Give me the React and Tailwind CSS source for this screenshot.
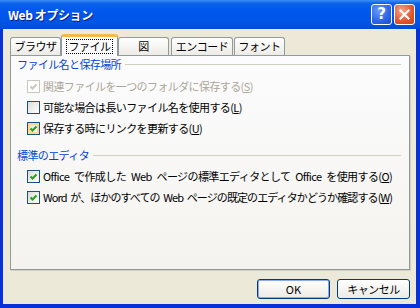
import React from 'react';

const ui = "font-['Noto_Sans_CJK_JP',sans-serif]";

function CheckBox({ checked, disabled, hot }) {
  return (
    <span
      className={`relative block w-[13px] h-[13px] shrink-0 border ${
        disabled ? 'border-[#CAC8BB] bg-white' : 'border-[#1C5180] bg-[linear-gradient(135deg,#DCDCD7,#FFFFFF)]'
      }`}
    >
      {hot && <span className="absolute inset-0 border-2 border-[#F9D98C]" />}
      {checked && (
        <svg className="absolute inset-0" width="11" height="11" viewBox="0 0 11 11">
          <path d="M2.5 5.5 L4.5 7.5 L8.5 3.5" fill="none" stroke={disabled ? '#CAC8BB' : '#21A121'} strokeWidth="2" />
        </svg>
      )}
    </span>
  );
}

function Row({ label, acc, checked, disabled, hot, mt, text }) {
  return (
    <div className={`flex items-center h-[21px] pl-[16px] ${mt || ''}`}>
      <CheckBox checked={checked} disabled={disabled} hot={hot} />
      <span
        className={`ml-[3px] text-[11px] leading-none whitespace-nowrap ${text || 'tracking-[-0.6px]'} ${
          disabled ? 'text-[#ACA899]' : 'text-black'
        }`}
      >
        {label}(<span className="underline">{acc}</span>)
      </span>
    </div>
  );
}

function GroupHeader({ text, mt }) {
  return (
    <div className={`flex items-center h-[16px] pl-[6px] pr-[8px] ${mt || ''}`}>
      <span className="text-[11px] tracking-[-0.6px] leading-none text-[#0046D5] whitespace-nowrap">{text}</span>
      <span className="flex-1 h-px ml-[4px] bg-[#D0D0BF]" />
    </div>
  );
}

function Tab({ label, className }) {
  return (
    <div
      className={`h-[18px] flex items-center justify-center rounded-t-[3px] border border-b-0 border-[#919B9C] bg-[linear-gradient(to_bottom,#FFFFFF,#ECEBE6)] text-[11px] tracking-[-0.5px] leading-none whitespace-nowrap text-black ${className}`}
    >
      {label}
    </div>
  );
}

export default function App() {
  return (
    <div className={`w-[420px] h-[308px] flex flex-col bg-[#0831D9] ${ui}`}>
      {/* title bar */}
      <div className="h-[29px] shrink-0 flex items-center pl-[8px] pr-[5px] bg-[linear-gradient(to_bottom,#3D8EF6_0%,#0A62EA_12%,#0058EE_35%,#0055E6_75%,#0049DA_100%)]">
        <span className="text-[12px] tracking-[-0.4px] font-bold text-white leading-none whitespace-nowrap [text-shadow:1px_1px_0_#0A1E8C]">
          Web オプション
        </span>
        <div className="ml-auto flex gap-[2px]">
          <div className="w-[21px] h-[21px] rounded-[3px] border border-white bg-[radial-gradient(circle_at_35%_30%,#6A9CF8,#2A63E6_60%,#1B4FD0)] flex items-center justify-center">
            <span className="text-white font-bold text-[15px] leading-none font-['DejaVu_Sans',sans-serif]">?</span>
          </div>
          <div className="w-[21px] h-[21px] rounded-[3px] border border-white bg-[radial-gradient(circle_at_35%_30%,#F3A58A,#E2552C_60%,#C9401A)] flex items-center justify-center">
            <svg width="11" height="11" viewBox="0 0 11 11">
              <path d="M1.5 1.5 L9.5 9.5 M9.5 1.5 L1.5 9.5" stroke="#fff" strokeWidth="2.2" strokeLinecap="square" />
            </svg>
          </div>
        </div>
      </div>

      {/* client */}
      <div className="flex-1 ml-[3px] mr-[4px] mb-[4px] bg-[#ECE9D8] flex flex-col pt-[5px]">
        <div className="relative z-10 h-[21px] flex items-end pl-[7px]">
          <Tab label="ブラウザ" className="w-[51px]" />
          <div className="w-[57px] h-[22px] -mb-px rounded-t-[3px] border border-b-0 border-[#919B9C] border-t-[3px] border-t-[#F5B948] bg-[#FCFCFE] flex items-center justify-center">
            <span className="w-[47px] h-[15px] flex items-center justify-center border border-dotted border-black text-[11px] tracking-[-0.5px] leading-none whitespace-nowrap text-black">
              ファイル
            </span>
          </div>
          <Tab label="図" className="w-[51px]" />
          <Tab label="エンコード" className="w-[62px] ml-[2px]" />
          <Tab label="フォント" className="w-[51px] ml-px" />
        </div>

        <div className="ml-[7px] w-[400px] h-[215px] shrink-0 border border-[#919B9C] shadow-[1px_1px_0_#D0CEBF] bg-[linear-gradient(to_bottom,#FCFCFE,#F4F3EE)]">
          <GroupHeader text="ファイル名と保存場所" />
          <Row label="関連ファイルを一つのフォルダに保存する" acc="S" checked disabled mt="mt-[4px]" />
          <Row label="可能な場合は長いファイル名を使用する" acc="L" />
          <Row label="保存する時にリンクを更新する" acc="U" checked hot />
          <GroupHeader text="標準のエディタ" mt="mt-[8px]" />
          <Row
            label="Office で作成した Web ページの標準エディタとして Office を使用する"
            acc="O"
            checked
            mt="mt-[3px]"
            text="tracking-[-0.6px] [word-spacing:3px]"
          />
          <Row
            label="Word が、ほかのすべての Web ページの既定のエディタかどうか確認する"
            acc="W"
            checked
            text="tracking-[-0.9px] [word-spacing:2px]"
          />
        </div>

        <div className="flex justify-end gap-[7px] mt-[9px] pr-[6px]">
          <button className="w-[73px] h-[20px] rounded-[3px] border border-[#003C74] bg-[linear-gradient(to_bottom,#FFFFFF,#ECEBE6)] shadow-[inset_0_0_0_1px_#8AA9F0] text-[11px] leading-none text-black">
            OK
          </button>
          <button className="w-[73px] h-[20px] rounded-[3px] border border-[#003C74] bg-[linear-gradient(to_bottom,#FFFFFF,#ECEBE6)] text-[11px] tracking-[-0.5px] leading-none text-black">
            キャンセル
          </button>
        </div>
      </div>
    </div>
  );
}
